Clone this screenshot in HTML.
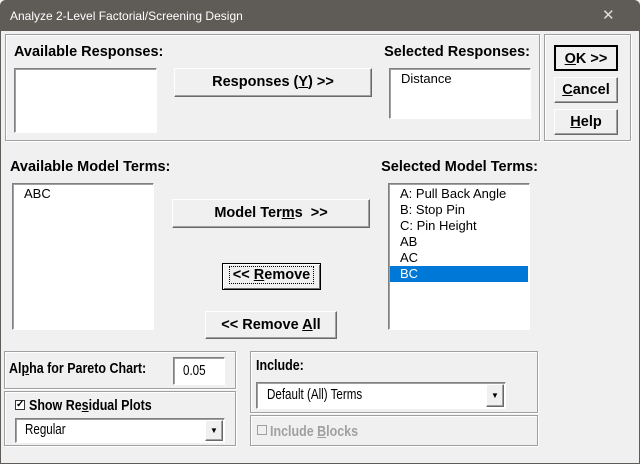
<!DOCTYPE html>
<html><head><style>
*{box-sizing:border-box;margin:0;padding:0}
body{width:640px;height:464px;background:#f0f0f0;position:relative;overflow:hidden;font-family:"Liberation Sans",Arial,sans-serif;font-size:13px;color:#000}
.a{position:absolute}
.frame{position:absolute;left:0;top:0;width:640px;height:464px;border:1px solid #5f5b57;border-radius:6px 6px 0 0}
.title{position:absolute;left:0;top:0;width:640px;height:31px;background:#5f5b57;color:#fff;font-size:12px;padding:9px 0 0 10px;border-radius:6px 6px 0 0}
.grp{position:absolute;border:1px solid #a0a0a0;box-shadow:inset 1px 1px 0 #fff,1px 1px 0 #fff}
.lbl{position:absolute;font-weight:bold;font-size:14.5px;white-space:nowrap}
.list{position:absolute;background:#fff;border:1px solid;border-color:#808080 #fff #fff #808080;box-shadow:inset 1px 1px 0 #a0a0a0;white-space:nowrap}
.btn{position:absolute;background:#f0f0f0;border:1px solid;border-color:#fff #696969 #696969 #fff;box-shadow:inset -1px -1px 0 #a0a0a0;font-weight:bold;text-align:center;font-size:14.5px;white-space:nowrap}
.item{position:absolute;left:1px;right:1px;height:16px;padding-left:10px;font-size:13px;line-height:16px}
.c{display:inline-block;transform:scaleX(.86);transform-origin:0 50%}
.d{display:inline-block;font-size:14.5px;transform:scaleX(.8);transform-origin:0 50%}
u{text-decoration:underline}
</style></head><body>
<div class="frame"></div>
<div class="title">Analyze 2-Level Factorial/Screening Design</div>
<div class="a" style="left:602px;top:8px;color:#ddd;font-size:15px;line-height:15px">✕</div>

<div class="grp" style="left:5px;top:34px;width:535px;height:107px"></div>
<div class="lbl" style="left:14px;top:44px">Available Responses:</div>
<div class="list" style="left:14px;top:68px;width:143px;height:65px"></div>
<div class="btn" style="left:174px;top:68px;width:198px;height:29px;line-height:27px">Responses (<u>Y</u>) &gt;&gt;</div>
<div class="lbl" style="right:110px;top:44px">Selected Responses:</div>
<div class="list" style="left:389px;top:68px;width:142px;height:51px"><div class="item" style="top:2px">Distance</div></div>

<div class="grp" style="left:544px;top:34px;width:87px;height:107px"></div>
<div class="btn" style="left:554px;top:45px;width:64px;height:26px;line-height:24px;border:2px solid #000;box-shadow:none"><u>O</u>K &gt;&gt;</div>
<div class="btn" style="left:554px;top:77px;width:64px;height:26px;line-height:24px"><u>C</u>ancel</div>
<div class="btn" style="left:554px;top:109px;width:64px;height:26px;line-height:24px"><u>H</u>elp</div>

<div class="lbl" style="left:10px;top:159px">Available Model Terms:</div>
<div class="list" style="left:12px;top:183px;width:142px;height:147px"><div class="item" style="top:2px">ABC</div></div>
<div class="lbl" style="right:102px;top:159px">Selected Model Terms:</div>
<div class="list" style="left:388px;top:183px;width:142px;height:147px">
<div class="item" style="top:2px">A: Pull Back Angle</div>
<div class="item" style="top:18px">B: Stop Pin</div>
<div class="item" style="top:34px">C: Pin Height</div>
<div class="item" style="top:50px">AB</div>
<div class="item" style="top:66px">AC</div>
<div class="item" style="top:82px;background:#0078d7;color:#fff">BC</div>
</div>
<div class="btn" style="left:172px;top:199px;width:198px;height:29px;line-height:27px">Model Ter<u>m</u>s &nbsp;&gt;&gt;</div>
<div class="btn" style="left:222px;top:263px;width:99px;height:27px;line-height:23px;border:1px solid #000;box-shadow:inset 1px 1px 0 #fff,inset -1px -1px 0 #696969"><span style="outline:1px dotted #000;padding:0 3px">&lt;&lt; <u>R</u>emove</span></div>
<div class="btn" style="left:205px;top:311px;width:132px;height:28px;line-height:26px">&lt;&lt; Remove <u>A</u>ll</div>

<div class="grp" style="left:4px;top:351px;width:232px;height:38px"></div>
<div class="lbl" style="left:9px;top:361px"><span class="c">Al<u>p</u>ha for Pareto Chart:</span></div>
<div class="list" style="left:173px;top:357px;width:52px;height:28px;padding:5px 0 0 9px"><span class="d">0.05</span></div>
<div class="grp" style="left:4px;top:391px;width:232px;height:55px"></div>
<div class="a" style="left:15px;top:400px;width:10px;height:10px;border:1px solid #333;background:#fff;font-size:10px;line-height:8px;text-align:center;font-weight:bold">✓</div>
<div class="lbl" style="left:29px;top:398px"><span class="c">Show Re<u>s</u>idual Plots</span></div>
<div class="list" style="left:15px;top:418px;width:210px;height:25px;padding:3px 0 0 9px"><span class="d">Regular</span></div>
<div class="btn" style="left:205px;top:420px;width:18px;height:21px;font-size:8px;line-height:20px">▼</div>

<div class="grp" style="left:250px;top:351px;width:288px;height:62px"></div>
<div class="lbl" style="left:256px;top:358px"><span class="c">Include:</span></div>
<div class="list" style="left:256px;top:382px;width:250px;height:27px;padding:4px 0 0 10px"><span class="d">Default (All) Terms</span></div>
<div class="btn" style="left:486px;top:384px;width:18px;height:23px;font-size:8px;line-height:22px">▼</div>
<div class="grp" style="left:250px;top:415px;width:288px;height:31px"></div>
<div class="a" style="left:257px;top:425px;width:10px;height:10px;border:1px solid #a0a0a0;background:#f0f0f0"></div>
<div class="lbl" style="left:270px;top:424px;color:#a0a0a0"><span class="c">Include <u>B</u>locks</span></div>
</body></html>
